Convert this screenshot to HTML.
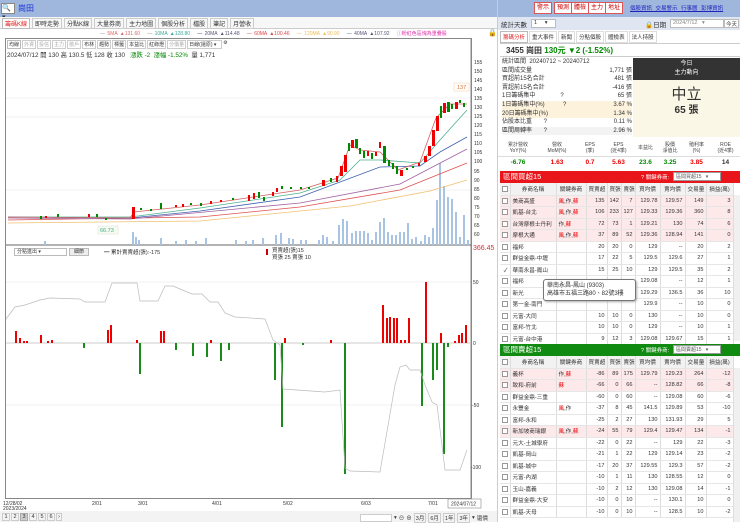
<!DOCTYPE html>
<html><head><meta charset="utf-8">
<style>
*{box-sizing:border-box;margin:0;padding:0}
body{width:740px;height:522px;overflow:hidden;background:#fff;font-family:"Liberation Sans","Noto Sans CJK TC",sans-serif;font-size:7px;color:#333;position:relative}
.a{position:absolute}
.btn{position:absolute;border:1px solid #bbb;background:#f4f4f4;font-size:6px;color:#333;text-align:center;line-height:9px;height:10px}
.rb{position:absolute;top:2px;height:12px;width:18px;background:#fff;border:1px solid #d55;color:#c00;font-size:6px;text-align:center;line-height:10px}
table{border-collapse:collapse;font-size:5.6px}
td{border-right:1px solid #ddd;border-bottom:1px solid #e6e6e6;padding:0 2px;white-space:nowrap;overflow:hidden;height:11.5px;text-align:right}
td.n{text-align:left}
tr.p td{background:#fde8ea}
tr.h td{background:#f2f2f2;text-align:center;height:12px}
.ck{display:inline-block;width:6px;height:6px;border:1px solid #999;background:#fff;vertical-align:middle}
.r{color:#e00}.g{color:#080}
</style></head><body>
<!-- top bar -->
<div class="a" style="left:0;top:0;width:740px;height:17px;background:#9fb7dd"></div>
<div class="a" style="left:1px;top:3px;width:14px;height:11px;background:#fff;border:1px solid #888;font-size:7px;line-height:9px">🔍▾</div>
<div class="a" style="left:18px;top:3px;font-size:8px;color:#1a33d6">崗田</div>
<!-- tabs left -->
<div class="a" style="left:0;top:17px;width:497px;height:12px;background:#f7f7f7;border-bottom:1px solid #ccc"></div>
<div class="a" style="left:2px;top:18px;font-size:6px;display:flex;gap:2px">
<span style="border:1px solid #bbb;background:#fff;color:#d22;padding:0 2px">籌碼K線</span><span style="border:1px solid #ccc;padding:0 2px">即時走勢</span><span style="border:1px solid #ccc;padding:0 2px">分點K線</span><span style="border:1px solid #ccc;padding:0 2px">大量券商</span><span style="border:1px solid #ccc;padding:0 2px">主力地圖</span><span style="border:1px solid #ccc;padding:0 2px">個股分析</span><span style="border:1px solid #ccc;padding:0 2px">檔股</span><span style="border:1px solid #ccc;padding:0 2px">筆記</span><span style="border:1px solid #ccc;padding:0 2px">月營收</span></div>
<!-- MA legend -->
<div class="a" style="left:100px;top:30px;font-size:5px;white-space:nowrap;word-spacing:1px">
<span style="color:#888">—</span> <span style="color:#d66">5MA ▲131.60</span> &nbsp; <span style="color:#888">—</span> <span style="color:#3a9">10MA ▲128.80</span> &nbsp; <span style="color:#336">—</span> <span style="color:#557">20MA ▲114.48</span> &nbsp; <span style="color:#d44">—</span> <span style="color:#d44">60MA ▲100.46</span> &nbsp; <span style="color:#eb5">—</span> <span style="color:#eb5">120MA ▲90.90</span> &nbsp; <span style="color:#557">—</span> <span style="color:#557">40MA ▲107.92</span> &nbsp; <span style="color:#d3a">ⓘ粉紅色區塊為重疊股</span></div>
<div class="a" style="left:488px;top:29px;font-size:7px">🔒</div>
<!-- chart frame -->
<div class="a" style="left:5px;top:38px;width:467px;height:461px;border:1px solid #888"></div>
<div class="a" style="left:7px;top:40px;display:flex;gap:1px;font-size:5px">
<span class="" style="border:1px solid #bbb;padding:0 1px">均線</span><span style="border:1px solid #ccc;padding:0 1px;color:#aaa">外資</span><span style="border:1px solid #ccc;padding:0 1px;color:#aaa">投信</span><span style="border:1px solid #ccc;padding:0 1px;color:#aaa">主力</span><span style="border:1px solid #ccc;padding:0 1px;color:#aaa">散戶</span><span style="border:1px solid #ccc;padding:0 1px">布林</span><span style="border:1px solid #ccc;padding:0 1px">趨勢</span><span style="border:1px solid #ccc;padding:0 1px">標籤</span><span style="border:1px solid #ccc;padding:0 1px">本益比</span><span style="border:1px solid #ccc;padding:0 1px">紅綠燈</span><span style="border:1px solid #ccc;padding:0 1px;color:#aaa">分價量</span><span style="border:1px solid #ccc;padding:0 1px;width:35px">日線(還原) ▾</span><span>⚙</span></div>
<div class="a" style="left:7px;top:50px;font-size:6.3px;white-space:nowrap">2024/07/12 開 130 高 130.5 低 128 收 130 &nbsp; <span class="g">漲跌 -2 &nbsp;漲幅 -1.52%</span> &nbsp;量 1,771</div>
<svg class="a" style="left:0;top:0" width="497" height="522">
<g stroke="#f0f0f0" stroke-width="1">
<line x1="6" y1="98" x2="471" y2="98"/><line x1="6" y1="117" x2="471" y2="117"/><line x1="6" y1="190" x2="471" y2="190"/><line x1="6" y1="282" x2="471" y2="282"/><line x1="6" y1="405" x2="471" y2="405"/></g>
<line x1="471" y1="38" x2="471" y2="499" stroke="#888"/>
<line x1="6" y1="245" x2="471" y2="245" stroke="#666"/>
<line x1="6" y1="343" x2="471" y2="343" stroke="#ccc"/>
<!-- volume -->
<g fill="#a9c4e2">
<rect x="44" y="241" width="2" height="4"/><rect x="132" y="232" width="2" height="13"/><rect x="135" y="237" width="2" height="8"/><rect x="138" y="240" width="2" height="5"/><rect x="160" y="238" width="2" height="7"/><rect x="175" y="241" width="2" height="4"/><rect x="185" y="240" width="2" height="5"/><rect x="195" y="241" width="2" height="4"/><rect x="205" y="238" width="2" height="7"/><rect x="235" y="240" width="2" height="5"/><rect x="245" y="241" width="2" height="4"/><rect x="252" y="240" width="2" height="5"/><rect x="262" y="238" width="2" height="7"/><rect x="275" y="235" width="2" height="10"/><rect x="280" y="233" width="2" height="12"/><rect x="288" y="238" width="2" height="7"/><rect x="292" y="239" width="2" height="6"/><rect x="300" y="240" width="2" height="5"/><rect x="305" y="240" width="2" height="5"/><rect x="318" y="240" width="2" height="5"/><rect x="322" y="235" width="2" height="10"/><rect x="326" y="237" width="2" height="8"/><rect x="332" y="241" width="2" height="4"/><rect x="338" y="225" width="2" height="20"/><rect x="342" y="219" width="2" height="26"/><rect x="346" y="221" width="2" height="24"/><rect x="351" y="233" width="2" height="12"/><rect x="355" y="231" width="2" height="14"/><rect x="359" y="231" width="2" height="14"/><rect x="363" y="231" width="2" height="14"/><rect x="367" y="233" width="2" height="12"/><rect x="371" y="240" width="2" height="5"/><rect x="375" y="232" width="2" height="13"/><rect x="379" y="222" width="2" height="23"/><rect x="383" y="218" width="2" height="27"/><rect x="387" y="232" width="2" height="13"/><rect x="391" y="235" width="2" height="10"/><rect x="395" y="235" width="2" height="10"/><rect x="399" y="232" width="2" height="13"/><rect x="403" y="232" width="2" height="13"/><rect x="407" y="223" width="2" height="22"/><rect x="411" y="239" width="2" height="6"/><rect x="415" y="237" width="2" height="8"/><rect x="420" y="241" width="2" height="4"/><rect x="424" y="235" width="2" height="10"/><rect x="428" y="237" width="2" height="8"/><rect x="432" y="228" width="2" height="17"/><rect x="436" y="200" width="2" height="45"/><rect x="439" y="163" width="2" height="82"/><rect x="443" y="186" width="2" height="59"/><rect x="447" y="197" width="2" height="48"/><rect x="451" y="199" width="2" height="46"/><rect x="455" y="212" width="2" height="33"/><rect x="459" y="237" width="2" height="8"/><rect x="463" y="215" width="2" height="30"/><rect x="467" y="240" width="2" height="5"/></g>
<!-- MAs -->
<g fill="none" stroke-width="0.8">
<polyline stroke="#f0c070" points="8,223 200,221 350,206 430,191 467,180"/>
<polyline stroke="#e05050" points="8,220 200,217 300,207 400,190 467,163"/>
<polyline stroke="#a060a0" points="8,218 130,219 300,203 400,184 467,149"/>
<polyline stroke="#4060b0" points="8,217 130,218 200,211 300,197 340,182 380,167 420,166 440,152 467,137"/>
<polyline stroke="#50b090" points="8,217 130,217 200,208 300,193 340,180 360,160 380,160 420,163 440,140 467,110"/>
<polyline stroke="#d06060" points="8,217 130,218 134,212 200,205 300,190 338,178 350,145 360,150 380,152 398,170 420,162 436,118 450,104 467,104"/>
</g>
<!-- candles -->
<g>
<rect x="40" y="216" width="2" height="3" fill="#080"/><rect x="45" y="216" width="2" height="2" fill="#e00"/><rect x="57" y="214" width="2" height="3" fill="#080"/><rect x="88" y="214" width="2" height="3" fill="#e00"/><rect x="96" y="214" width="2" height="3" fill="#080"/><rect x="105" y="218" width="2" height="2" fill="#080"/><rect x="132" y="207" width="3" height="12" fill="#e00"/><rect x="140" y="208" width="2" height="2" fill="#080"/><rect x="150" y="209" width="2" height="2" fill="#080"/><rect x="160" y="203" width="2" height="6" fill="#080"/><rect x="175" y="205" width="2" height="2" fill="#e00"/><rect x="182" y="204" width="2" height="3" fill="#e00"/><rect x="190" y="203" width="2" height="2" fill="#080"/><rect x="200" y="203" width="2" height="3" fill="#080"/><rect x="210" y="201" width="2" height="3" fill="#e00"/><rect x="220" y="200" width="2" height="2" fill="#e00"/><rect x="232" y="198" width="2" height="2" fill="#080"/><rect x="248" y="195" width="2" height="6" fill="#e00"/><rect x="253" y="193" width="2" height="6" fill="#e00"/><rect x="258" y="192" width="2" height="6" fill="#080"/><rect x="263" y="197" width="2" height="4" fill="#080"/><rect x="272" y="192" width="2" height="4" fill="#e00"/><rect x="276" y="188" width="2" height="4" fill="#e00"/><rect x="281" y="186" width="2" height="3" fill="#080"/><rect x="290" y="187" width="2" height="2" fill="#080"/><rect x="300" y="187" width="2" height="2" fill="#080"/><rect x="308" y="187" width="2" height="2" fill="#080"/><rect x="322" y="180" width="3" height="6" fill="#e00"/><rect x="330" y="178" width="2" height="4" fill="#080"/><rect x="336" y="176" width="2" height="6" fill="#e00"/><rect x="340" y="166" width="3" height="10" fill="#e00"/><rect x="344" y="155" width="3" height="17" fill="#e00"/><rect x="348" y="143" width="2" height="8" fill="#080"/><rect x="351" y="140" width="3" height="8" fill="#e00"/><rect x="355" y="139" width="3" height="9" fill="#080"/><rect x="359" y="148" width="2" height="6" fill="#080"/><rect x="363" y="151" width="2" height="7" fill="#080"/><rect x="367" y="151" width="2" height="5" fill="#e00"/><rect x="371" y="153" width="2" height="6" fill="#080"/><rect x="375" y="152" width="2" height="4" fill="#e00"/><rect x="379" y="142" width="2" height="6" fill="#e00"/><rect x="383" y="146" width="3" height="17" fill="#080"/><rect x="388" y="160" width="2" height="6" fill="#080"/><rect x="392" y="163" width="2" height="6" fill="#080"/><rect x="396" y="166" width="2" height="8" fill="#080"/><rect x="400" y="170" width="3" height="6" fill="#e00"/><rect x="406" y="168" width="2" height="2" fill="#080"/><rect x="412" y="166" width="2" height="2" fill="#080"/><rect x="418" y="163" width="2" height="3" fill="#e00"/><rect x="424" y="156" width="3" height="6" fill="#e00"/><rect x="428" y="146" width="3" height="10" fill="#e00"/><rect x="432" y="130" width="3" height="16" fill="#e00"/><rect x="436" y="116" width="3" height="15" fill="#e00"/><rect x="440" y="106" width="2" height="12" fill="#080"/><rect x="443" y="103" width="3" height="10" fill="#e00"/><rect x="447" y="102" width="3" height="10" fill="#080"/><rect x="451" y="104" width="2" height="5" fill="#080"/><rect x="455" y="102" width="3" height="7" fill="#e00"/><rect x="459" y="100" width="2" height="3" fill="#080"/><rect x="463" y="103" width="2" height="4" fill="#080"/>
</g>
<text x="457" y="89" font-size="5.5" fill="#e07030" font-family="Liberation Sans">137</text>
<rect x="454" y="83" width="15" height="8" fill="none" stroke="#f3d0a0" stroke-width="0.5"/>
<rect x="98" y="226" width="20" height="8" fill="#f6fbf0" stroke="#ddd" stroke-width="0.5"/>
<text x="100" y="232" font-size="5.5" fill="#4a8" font-family="Liberation Sans">66.73</text>
<!-- lower bars -->
<g fill="#e00">
<rect x="15" y="331" width="2" height="12"/><rect x="19" y="338" width="2" height="5"/><rect x="23" y="341" width="2" height="2"/><rect x="26" y="341" width="2" height="2"/><rect x="40" y="335" width="2" height="8"/><rect x="47" y="341" width="2" height="2"/><rect x="51" y="340" width="2" height="3"/><rect x="107" y="330" width="2" height="13"/><rect x="110" y="325" width="2" height="18"/><rect x="136" y="340" width="2" height="3"/><rect x="160" y="331" width="2" height="12"/><rect x="163" y="331" width="2" height="12"/><rect x="210" y="340" width="2" height="3"/><rect x="284" y="338" width="2" height="5"/><rect x="330" y="340" width="2" height="3"/><rect x="382" y="305" width="2" height="38"/><rect x="386" y="318" width="2" height="25"/><rect x="389" y="317" width="2" height="26"/><rect x="393" y="318" width="2" height="25"/><rect x="396" y="318" width="2" height="25"/><rect x="400" y="340" width="2" height="3"/><rect x="404" y="340" width="2" height="3"/><rect x="408" y="318" width="2" height="25"/><rect x="425" y="282" width="2" height="61"/><rect x="440" y="333" width="2" height="10"/><rect x="454" y="341" width="2" height="2"/><rect x="458" y="335" width="2" height="8"/><rect x="461" y="333" width="2" height="10"/><rect x="465" y="325" width="2" height="18"/></g>
<g fill="#1a8a1a">
<rect x="83" y="343" width="2" height="5"/><rect x="139" y="343" width="2" height="31"/><rect x="175" y="343" width="2" height="7"/><rect x="192" y="343" width="2" height="13"/><rect x="206" y="343" width="2" height="14"/><rect x="220" y="343" width="2" height="18"/><rect x="228" y="343" width="2" height="7"/><rect x="274" y="343" width="2" height="37"/><rect x="281" y="343" width="2" height="84"/><rect x="302" y="343" width="2" height="2"/><rect x="344" y="343" width="2" height="131"/><rect x="421" y="343" width="2" height="63"/><rect x="432" y="343" width="2" height="37"/><rect x="436" y="343" width="2" height="27"/><rect x="443" y="343" width="2" height="111"/><rect x="447" y="343" width="2" height="4"/></g>
<polyline fill="none" stroke="#bbb" stroke-width="0.7" points="6,319 15,307 25,305 40,300 50,298 80,299 85,302 105,302 112,283 137,283 140,301 158,301 165,286 173,286 180,289 192,294 202,294 210,302 218,302 225,313 235,317 265,319 273,340 280,345 283,389 325,392 340,390 345,468 350,471 380,472 395,385 400,367 406,365 410,370 420,370 425,385 432,402 437,405 445,470 460,470 467,450"/>
<g font-size="5" fill="#333" font-family="Liberation Sans">
<text x="474" y="64">155</text><text x="474" y="73">150</text><text x="474" y="82">145</text><text x="474" y="91">140</text><text x="474" y="100">135</text><text x="474" y="109">130</text><text x="474" y="118">125</text><text x="474" y="127">120</text><text x="474" y="136">115</text><text x="474" y="145">110</text><text x="474" y="154">105</text><text x="474" y="163">100</text><text x="474" y="173">95</text><text x="474" y="182">90</text><text x="474" y="191">85</text><text x="474" y="200">80</text><text x="474" y="209">75</text><text x="474" y="218">70</text><text x="474" y="227">65</text><text x="474" y="236">60</text>
<text x="473" y="284">50</text><text x="473" y="345">0</text><text x="472" y="407">-50</text><text x="471" y="469">-100</text>
<text x="3" y="505">12/28/02</text><text x="3" y="510">2023/2024</text><text x="92" y="505">2/01</text><text x="138" y="505">3/01</text><text x="212" y="505">4/01</text><text x="283" y="505">5/02</text><text x="361" y="505">6/03</text><text x="428" y="505">7/01</text></g>
<text x="473" y="250" font-size="7" fill="#c33" font-family="Liberation Sans">366.45</text>
<rect x="448" y="499" width="33" height="9" fill="#fff" stroke="#888" stroke-width="0.6"/>
<text x="451" y="505.5" font-size="5" fill="#333" font-family="Liberation Sans">2024/07/12</text>
<rect x="266" y="249" width="2" height="6" fill="#c00"/>
</svg>
<div class="a" style="left:14px;top:248px;width:53px;height:8px;border:1px solid #bbb;font-size:5px;line-height:6px;padding-left:2px">分點進出 ▾</div>
<div class="a" style="left:69px;top:248px;width:20px;height:8px;border:1px solid #bbb;background:#eee;font-size:5px;line-height:6px;text-align:center">細節</div>
<div class="a" style="left:104px;top:248px;font-size:5.5px">━ 累計賣賣超(張):-175</div>
<div class="a" style="left:272px;top:248px;font-size:5.5px;line-height:7px">買賣超(張)15<br>買張 25 賣張 10</div>
<!-- bottom bar -->
<div class="a" style="left:0;top:511px;width:497px;height:11px;background:#f3f3f3"></div>
<div class="a" style="left:2px;top:513px;display:flex;gap:1px;font-size:5.5px">
<span style="border:1px solid #ccc;width:8px;text-align:center">1</span><span style="border:1px solid #ccc;width:8px;text-align:center">2</span><span style="border:1px solid #aaa;width:8px;text-align:center;background:#ccc">3</span><span style="border:1px solid #ccc;width:8px;text-align:center">4</span><span style="border:1px solid #ccc;width:8px;text-align:center">5</span><span style="border:1px solid #ccc;width:8px;text-align:center">6</span><span style="border:1px solid #ccc;width:6px;text-align:center">›</span></div>
<div class="a" style="left:360px;top:513px;display:flex;gap:2px;font-size:5.5px;align-items:center">
<span style="border:1px solid #ccc;width:32px;height:8px;background:#fff"></span><span>▾</span><span>⊖</span><span>⊕</span><span style="border:1px solid #ccc;padding:0 1px">3月</span><span style="border:1px solid #ccc;padding:0 1px">6月</span><span style="border:1px solid #ccc;padding:0 1px">1年</span><span style="border:1px solid #ccc;padding:0 1px">3年</span><span>▾</span><span>還價</span></div>

<!-- RIGHT -->
<div class="a" style="left:497px;top:0;width:1px;height:522px;background:#ccc"></div>
<div class="rb" style="left:534px">警示</div><div class="rb" style="left:554px">預測</div><div class="rb" style="left:571px">體檢</div><div class="rb" style="left:588px">主力</div><div class="rb" style="left:605px">地址</div>
<div class="a" style="left:630px;top:4px;font-size:5.5px;color:#22b;text-decoration:underline;white-space:nowrap;word-spacing:2px">個股資訊 交易警示 行事曆 彭博資訊</div>
<div class="a" style="left:498px;top:17px;width:242px;height:13px;background:#dfe6f2"></div>
<div class="a" style="left:501px;top:19px;font-size:6.5px">統計天數</div>
<div class="a" style="left:531px;top:19px;width:25px;height:9px;border:1px solid #bbb;background:#fff;font-size:5.5px;padding-left:2px">1 &nbsp; &nbsp; ▾</div>
<div class="a" style="left:645px;top:19px;font-size:6.5px">🔒日期</div>
<div class="a" style="left:670px;top:19px;width:54px;height:9px;border:1px solid #bbb;background:#fff;font-size:5.5px;color:#888;padding-left:2px">2024/7/12 &nbsp; ▾</div>
<div class="a" style="left:724px;top:19px;width:15px;height:9px;border:1px solid #bbb;background:#fff;font-size:5.5px;text-align:center">今天</div>
<div class="a" style="left:500px;top:31px;display:flex;gap:1px;font-size:5.5px">
<span style="border:1px solid #bbb;padding:1px 2px;color:#d22;background:#fff">籌碼分析</span><span style="border:1px solid #ddd;padding:1px 2px">重大事件</span><span style="border:1px solid #ddd;padding:1px 2px">新聞</span><span style="border:1px solid #ddd;padding:1px 2px">分點個股</span><span style="border:1px solid #ddd;padding:1px 2px">體檢表</span><span style="border:1px solid #ddd;padding:1px 2px">法人持股</span></div>
<div class="a" style="left:500px;top:43px;width:240px;height:14px;border-top:1px solid #ccc;border-bottom:1px solid #ccc;font-size:8px;line-height:13px;padding-left:6px;font-weight:bold">3455 崗田 <span class="g">130元 ▼2 (-1.52%)</span></div>
<div class="a" style="left:502px;top:58px;width:130px;font-size:6px;line-height:8.6px">
<div>統計區間 &nbsp;20240712 ~ 20240712</div>
<div style="display:flex;justify-content:space-between"><span>區間成交量</span><span>1,771 張</span></div>
<div style="display:flex;justify-content:space-between"><span>買超前15名合計</span><span>481 張</span></div>
<div style="display:flex;justify-content:space-between"><span>賣超前15名合計</span><span>-416 張</span></div>
<div style="display:flex;justify-content:space-between"><span>1日籌碼集中 &nbsp; &nbsp; &nbsp; &nbsp; &nbsp; &nbsp; &nbsp; ?</span><span>65 張</span></div>
<div style="display:flex;justify-content:space-between;background:#fdf3dc"><span>1日籌碼集中(%) &nbsp; &nbsp; &nbsp; &nbsp; &nbsp; ?</span><span>3.67 %</span></div>
<div style="display:flex;justify-content:space-between;background:#fdf3dc"><span>20日籌碼集中(%)</span><span>1.34 %</span></div>
<div style="display:flex;justify-content:space-between"><span>佔股本比重 &nbsp; &nbsp; &nbsp; ?</span><span>0.11 %</span></div>
<div style="display:flex;justify-content:space-between;background:#f3f3f3"><span>區間周轉率 &nbsp; &nbsp; &nbsp; ?</span><span>2.96 %</span></div></div>
<div class="a" style="left:633px;top:58px;width:107px;height:79px;background:#fbf7e6"></div>
<div class="a" style="left:633px;top:58px;width:107px;height:22px;background:#333;color:#fff;font-size:6px;text-align:center;line-height:9px;padding-top:2px">今日<br>主力動向</div>
<div class="a" style="left:633px;top:83px;width:107px;text-align:center;font-size:15px;color:#333">中立</div>
<div class="a" style="left:633px;top:101px;width:107px;text-align:center;font-size:10px;font-weight:bold">65 張</div>
<div class="a" style="left:498px;top:139px;width:242px;height:30px;font-size:5px">
<div style="display:flex;text-align:center;height:18px;border-bottom:1px solid #ddd;line-height:6px;padding-top:3px;color:#444">
<span style="width:40px">累計營收<br>YoY(%)</span><span style="width:38px">營收<br>MoM(%)</span><span style="width:28px">EPS<br>(季)</span><span style="width:29px">EPS<br>(近4季)</span><span style="width:25px;padding-top:3px">本益比</span><span style="width:24px">股價<br>淨值比</span><span style="width:29px">殖利率<br>(%)</span><span style="width:29px">ROE<br>(近4季)</span></div>
<div style="display:flex;text-align:center;font-size:6.5px;font-weight:bold;line-height:11px">
<span class="g" style="width:40px">-6.76</span><span class="r" style="width:38px">1.63</span><span class="r" style="width:28px">0.7</span><span class="r" style="width:29px">5.63</span><span class="g" style="width:25px">23.6</span><span class="g" style="width:24px">3.25</span><span class="r" style="width:29px">3.85</span><span style="width:29px">14</span></div></div>
<!-- red table -->
<div class="a" style="left:500px;top:171px;width:240px;height:12px;background:#e8151b;color:#fff;font-size:7.5px;line-height:12px;padding-left:3px">區間買超15</div>
<div class="a" style="left:641px;top:173px;font-size:5.5px;color:#fff">? 關鍵券商:</div>
<div class="a" style="left:673px;top:172px;width:48px;height:9px;background:#fff;border:1px solid #999;font-size:5px;padding-left:2px;color:#555">區間買超15 &nbsp; ▾</div>
<div class="a" style="left:500px;top:183px;width:233px">
<table style="width:233px;table-layout:fixed">
<colgroup><col style="width:10px"><col style="width:46px"><col style="width:30px"><col style="width:21px"><col style="width:14px"><col style="width:14px"><col style="width:25px"><col style="width:25px"><col style="width:21px"><col style="width:27px"></colgroup>
<tr class="h"><td><span class="ck"></span></td><td>券商名稱</td><td>關鍵券商</td><td>買賣超</td><td>買張</td><td>賣張</td><td>買均價</td><td>賣均價</td><td>交易量</td><td>損益(萬)</td></tr>
<tr class="p"><td><span class="ck"></span></td><td class="n">美商高盛</td><td class="n"><span class="r">風</span>,作,<span class="r">蘇</span></td><td>135</td><td>142</td><td>7</td><td>129.78</td><td>129.57</td><td>149</td><td>3</td></tr>
<tr class="p"><td><span class="ck"></span></td><td class="n">凱基-台北</td><td class="n"><span class="r">風</span>,作,<span class="r">蘇</span></td><td>106</td><td>233</td><td>127</td><td>129.33</td><td>129.36</td><td>360</td><td>8</td></tr>
<tr class="p"><td><span class="ck"></span></td><td class="n">台灣摩根士丹利</td><td class="n">作,<span class="r">蘇</span></td><td>72</td><td>73</td><td>1</td><td>129.21</td><td>130</td><td>74</td><td>6</td></tr>
<tr class="p"><td><span class="ck"></span></td><td class="n">摩根大通</td><td class="n"><span class="r">風</span>,作,<span class="r">蘇</span></td><td>37</td><td>89</td><td>52</td><td>129.36</td><td>128.94</td><td>141</td><td>0</td></tr>
<tr><td><span class="ck"></span></td><td class="n">福邦</td><td></td><td>20</td><td>20</td><td>0</td><td>129</td><td>--</td><td>20</td><td>2</td></tr>
<tr><td><span class="ck"></span></td><td class="n">群益金鼎-中壢</td><td></td><td>17</td><td>22</td><td>5</td><td>129.5</td><td>129.6</td><td>27</td><td>1</td></tr>
<tr><td>✓</td><td class="n">華南永昌-鳳山</td><td></td><td>15</td><td>25</td><td>10</td><td>129</td><td>129.5</td><td>35</td><td>2</td></tr>
<tr><td><span class="ck"></span></td><td class="n">福邦</td><td></td><td></td><td></td><td></td><td>129.08</td><td>--</td><td>12</td><td>1</td></tr>
<tr><td><span class="ck"></span></td><td class="n">新光</td><td></td><td></td><td></td><td></td><td>129.29</td><td>136.5</td><td>36</td><td>10</td></tr>
<tr><td><span class="ck"></span></td><td class="n">第一金-南門</td><td></td><td></td><td></td><td></td><td>129.9</td><td>--</td><td>10</td><td>0</td></tr>
<tr><td><span class="ck"></span></td><td class="n">元富-大同</td><td></td><td>10</td><td>10</td><td>0</td><td>130</td><td>--</td><td>10</td><td>0</td></tr>
<tr><td><span class="ck"></span></td><td class="n">富邦-竹北</td><td></td><td>10</td><td>10</td><td>0</td><td>129</td><td>--</td><td>10</td><td>1</td></tr>
<tr><td><span class="ck"></span></td><td class="n">元富-台中港</td><td></td><td>9</td><td>12</td><td>3</td><td>129.08</td><td>129.67</td><td>15</td><td>1</td></tr>
</table></div>
<div class="a" style="left:733px;top:195px;width:7px;height:146px;background:#f0f0f0;border-left:1px solid #ddd"></div>
<div class="a" style="left:543px;top:279px;width:93px;height:22px;background:#fff;border:1px solid #777;border-radius:3px;font-size:6px;line-height:8px;padding:2px 3px;box-shadow:1px 1px 2px #aaa">華南永昌-鳳山 (9303)<br>高雄市五福三路80、82號3樓</div>
<!-- green table -->
<div class="a" style="left:500px;top:344px;width:240px;height:12px;background:#118a11;color:#fff;font-size:7.5px;line-height:12px;padding-left:3px">區間賣超15</div>
<div class="a" style="left:641px;top:346px;font-size:5.5px;color:#fff">? 關鍵券商:</div>
<div class="a" style="left:673px;top:345px;width:48px;height:9px;background:#fff;border:1px solid #999;font-size:5px;padding-left:2px;color:#555">區間賣超15 &nbsp; ▾</div>
<div class="a" style="left:500px;top:356px;width:233px">
<table style="width:233px;table-layout:fixed">
<colgroup><col style="width:10px"><col style="width:46px"><col style="width:30px"><col style="width:21px"><col style="width:14px"><col style="width:14px"><col style="width:25px"><col style="width:25px"><col style="width:21px"><col style="width:27px"></colgroup>
<tr class="h"><td><span class="ck"></span></td><td>券商名稱</td><td>關鍵券商</td><td>買賣超</td><td>買張</td><td>賣張</td><td>買均價</td><td>賣均價</td><td>交易量</td><td>損益(萬)</td></tr>
<tr class="p"><td><span class="ck"></span></td><td class="n">義杯</td><td class="n">作,<span class="r">蘇</span></td><td>-86</td><td>89</td><td>175</td><td>129.79</td><td>129.23</td><td>264</td><td>-12</td></tr>
<tr class="p"><td><span class="ck"></span></td><td class="n">致和-府前</td><td class="n"><span class="r">蘇</span></td><td>-66</td><td>0</td><td>66</td><td>--</td><td>128.82</td><td>66</td><td>-8</td></tr>
<tr><td><span class="ck"></span></td><td class="n">群益金鼎-三重</td><td></td><td>-60</td><td>0</td><td>60</td><td>--</td><td>129.08</td><td>60</td><td>-6</td></tr>
<tr><td><span class="ck"></span></td><td class="n">永豐金</td><td class="n"><span class="r">風</span>,作</td><td>-37</td><td>8</td><td>45</td><td>141.5</td><td>129.89</td><td>53</td><td>-10</td></tr>
<tr><td><span class="ck"></span></td><td class="n">富邦-永和</td><td></td><td>-25</td><td>2</td><td>27</td><td>130</td><td>131.93</td><td>29</td><td>5</td></tr>
<tr class="p"><td><span class="ck"></span></td><td class="n">新加坡商瑞銀</td><td class="n"><span class="r">風</span>,作,<span class="r">蘇</span></td><td>-24</td><td>55</td><td>79</td><td>129.4</td><td>129.47</td><td>134</td><td>-1</td></tr>
<tr><td><span class="ck"></span></td><td class="n">元大-土城學府</td><td></td><td>-22</td><td>0</td><td>22</td><td>--</td><td>129</td><td>22</td><td>-3</td></tr>
<tr><td><span class="ck"></span></td><td class="n">凱基-岡山</td><td></td><td>-21</td><td>1</td><td>22</td><td>129</td><td>129.14</td><td>23</td><td>-2</td></tr>
<tr><td><span class="ck"></span></td><td class="n">凱基-城中</td><td></td><td>-17</td><td>20</td><td>37</td><td>129.55</td><td>129.3</td><td>57</td><td>-2</td></tr>
<tr><td><span class="ck"></span></td><td class="n">元富-內湖</td><td></td><td>-10</td><td>1</td><td>11</td><td>130</td><td>128.55</td><td>12</td><td>0</td></tr>
<tr><td><span class="ck"></span></td><td class="n">玉山-嘉義</td><td></td><td>-10</td><td>2</td><td>12</td><td>130</td><td>129.08</td><td>14</td><td>-1</td></tr>
<tr><td><span class="ck"></span></td><td class="n">群益金鼎-大安</td><td></td><td>-10</td><td>0</td><td>10</td><td>--</td><td>130.1</td><td>10</td><td>0</td></tr>
<tr><td><span class="ck"></span></td><td class="n">凱基-天母</td><td></td><td>-10</td><td>0</td><td>10</td><td>--</td><td>128.5</td><td>10</td><td>-2</td></tr>
</table></div>
<div class="a" style="left:733px;top:368px;width:7px;height:154px;background:#f0f0f0;border-left:1px solid #ddd"></div>
</body></html>
